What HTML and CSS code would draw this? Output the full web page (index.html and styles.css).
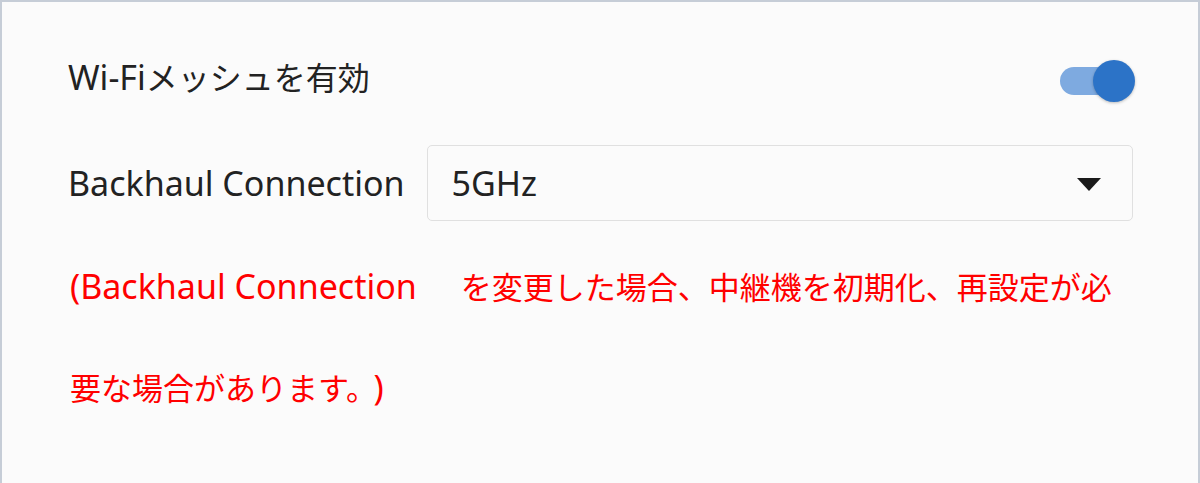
FILE: index.html
```html
<!DOCTYPE html>
<html lang="ja">
<head>
  <meta charset="UTF-8">
  <meta name="viewport" content="width=device-width, initial-scale=1.0">
  <title>Wi-Fiメッシュ</title>
  <link rel="stylesheet" href="styles.css">
</head>
<body>
  <div class="panel">
    <div class="row toggle-row">
      <span class="label"><span class="en">Wi-Fi</span>メッシュを有効</span>
      <label class="switch">
        <input type="checkbox" checked>
        <span class="track"></span>
        <span class="knob"></span>
      </label>
    </div>

    <div class="row select-row">
      <span class="label en">Backhaul Connection</span>
      <div class="select">
        <span class="value en">5GHz</span>
        <span class="arrow"></span>
      </div>
    </div>

    <p class="notice"><span class="en lead">(Backhaul Connection</span> を変更した場合、中継機を初期化、再設定が必要な場合があります。<span class="en tail">)</span></p>
  </div>
</body>
</html>
```

FILE: styles.css
```css
body {
  margin: 0;
  font-family: "Noto Sans", "Noto Sans CJK JP", sans-serif;
  background-color: #fbfbfb;
}

.panel {
  box-sizing: border-box;
  height: 483px;
  padding: 44px 65px 0 66px;
  border: 2px solid #c6cdd7;
  border-bottom: none;
  background-color: #fbfbfb;
  color: #222;
  font-size: 32px;
}

/* latin text runs a little larger, like the original system font */
.en {
  font-size: 34px;
}

.row {
  display: flex;
  align-items: center;
}

.toggle-row {
  justify-content: space-between;
  height: 60px;
}

.select-row {
  margin-top: 39px;
  gap: 22px;
}

.label {
  white-space: nowrap;
}

/* toggle switch */
.switch {
  position: relative;
  width: 75px;
  height: 42px;
  margin-top: 10px;
  margin-right: -2px;
}

.switch input {
  display: none;
}

.track {
  position: absolute;
  left: 0;
  top: 7px;
  width: 60px;
  height: 28px;
  border-radius: 14px;
  background-color: #7eaae0;
}

.knob {
  position: absolute;
  right: 0;
  top: 0;
  width: 42px;
  height: 42px;
  border-radius: 50%;
  background-color: #2c73c7;
  box-shadow: 0 1px 3px rgba(0, 0, 0, 0.25);
}

/* select box */
.select {
  flex: 1;
  box-sizing: border-box;
  height: 76px;
  display: flex;
  align-items: center;
  justify-content: space-between;
  padding: 0 31px 0 24px;
  border: 1px solid #e0e0e0;
  border-radius: 5px;
  background-color: #fbfbfb;
}

.arrow {
  width: 0;
  height: 0;
  border-left: 12px solid transparent;
  border-right: 12px solid transparent;
  border-top: 13px solid #1a1a1a;
  margin-top: 2px;
}

.notice {
  margin: 15px 0 0 2px;
  color: #ff0000;
  font-size: 31px;
  line-height: 100px;
}

.notice .lead {
  margin-right: 36px;
}

.notice .tail {
  margin-left: 12px;
}
```
